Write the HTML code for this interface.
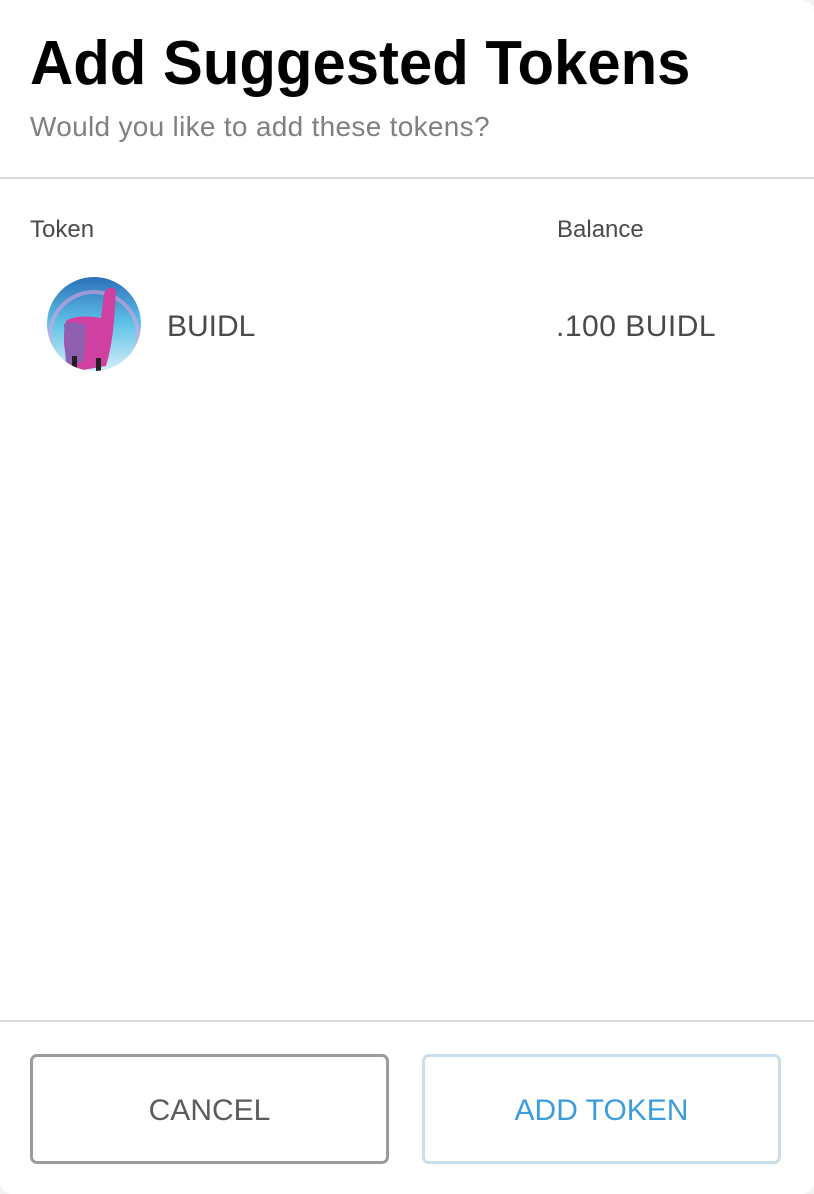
<!DOCTYPE html>
<html><head><style>
html,body{margin:0;padding:0;background:#f2f2f2;}
body{width:814px;height:1194px;position:relative;overflow:hidden;font-family:"Liberation Sans",sans-serif;}
.card{position:absolute;left:0;top:0;width:814px;height:1194px;background:#fff;border-radius:0 12px 12px 12px;}
.t{position:absolute;white-space:nowrap;}
.sep{position:absolute;left:0;width:814px;height:2px;background:#d6dadf;}
.btn{position:absolute;top:1054px;width:359px;height:110px;border-radius:7px;box-sizing:border-box;display:flex;align-items:center;justify-content:center;font-size:30px;padding-top:4px;}
</style></head><body>
<div class="card">
<div class="t" style="left:30px;top:28px;font-size:62px;font-weight:bold;color:#000;transform:scaleX(0.965);transform-origin:left;">Add Suggested Tokens</div>
<div class="t" style="left:30px;top:111px;font-size:28px;color:#808080;letter-spacing:0.3px;">Would you like to add these tokens?</div>
<div class="sep" style="top:177px;"></div>
<div class="t" style="left:30px;top:216px;font-size:24px;color:#4a4a4a;">Token</div>
<div class="t" style="left:557px;top:216px;font-size:24px;color:#4a4a4a;">Balance</div>
<svg style="position:absolute;left:46px;top:276px" width="96" height="96" viewBox="0 0 96 96">
<defs><clipPath id="c"><circle cx="48" cy="48" r="47"/></clipPath>
<linearGradient id="sky" x1="0" y1="0" x2="0" y2="1"><stop offset="0" stop-color="#2a6fb8"/><stop offset="0.5" stop-color="#5fc3e8"/><stop offset="1" stop-color="#d8eef8"/></linearGradient></defs>
<g clip-path="url(#c)">
<rect width="96" height="96" fill="url(#sky)"/>
<circle cx="48" cy="60" r="44" fill="none" stroke="#e0a0e0" stroke-width="4" opacity="0.6"/>
<path d="M20 45 Q30 38 55 42 L58 18 Q62 8 70 14 L68 45 Q66 70 60 90 L25 96 Q14 70 20 45Z" fill="#d040a0"/>
<path d="M18 48 Q30 44 40 50 L38 85 L20 90 Z" fill="#9060b0"/>
<rect x="26" y="80" width="5" height="16" fill="#222"/><rect x="50" y="82" width="5" height="14" fill="#222"/>
</g></svg>
<div class="t" style="left:167px;top:310px;font-size:30px;color:#4a4a4a;">BUIDL</div>
<div class="t" style="left:556px;top:310px;font-size:30px;color:#4a4a4a;letter-spacing:0.5px;">.100 BUIDL</div>
<div class="sep" style="top:1020px;"></div>
<div class="btn" style="left:30px;border:3px solid #9b9b9b;color:#5b5b5b;">CANCEL</div>
<div class="btn" style="left:422px;border:3px solid #c8deed;color:#3b9de0;">ADD TOKEN</div>
</div>
</body></html>
